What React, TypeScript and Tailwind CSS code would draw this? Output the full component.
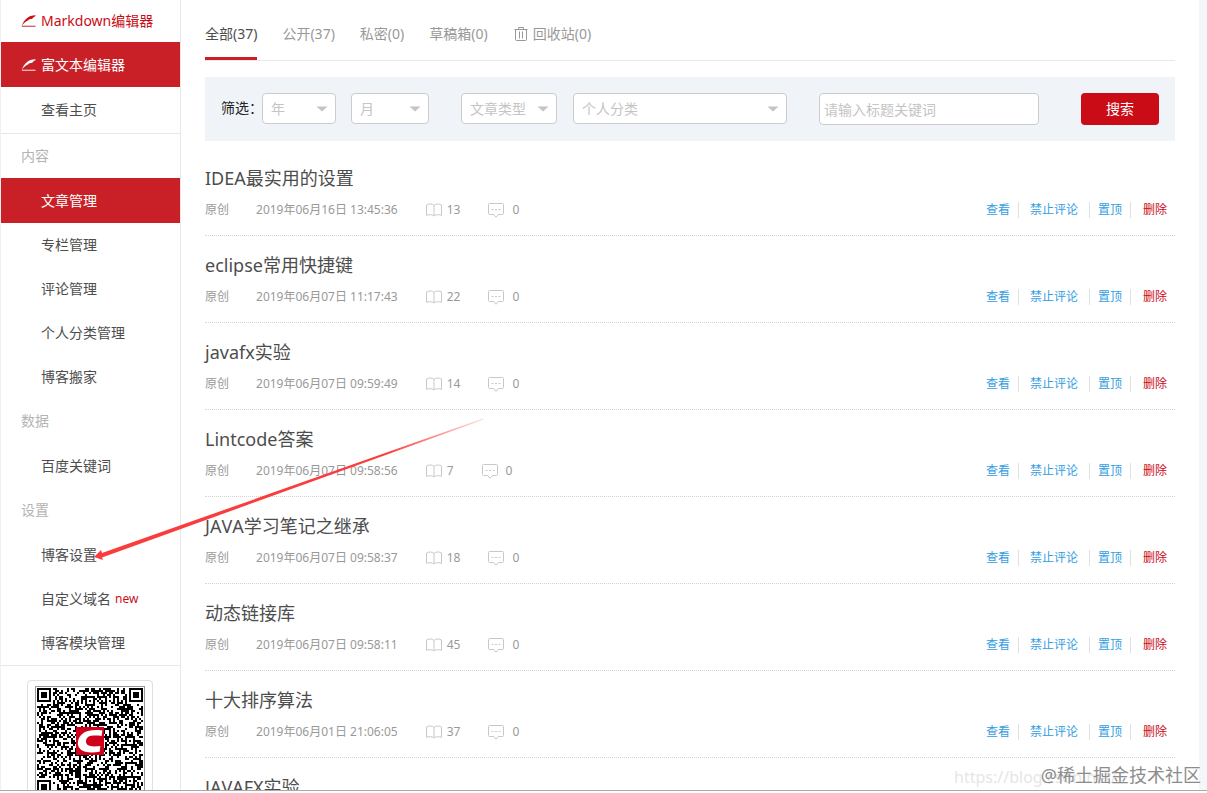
import { useMemo } from 'react';

const EDITORS = [
  { label: 'Markdown编辑器', active: false },
  { label: '富文本编辑器', active: true },
];

const GROUPS = [
  {
    title: '内容',
    items: ['文章管理', '专栏管理', '评论管理', '个人分类管理', '博客搬家'],
  },
  { title: '数据', items: ['百度关键词'] },
  { title: '设置', items: ['博客设置', '自定义域名', '博客模块管理'] },
];

const TABS = ['全部(37)', '公开(37)', '私密(0)', '草稿箱(0)'];

const ARTICLES = [
  { title: 'IDEA最实用的设置', date: '2019年06月16日 13:45:36', reads: 13 },
  { title: 'eclipse常用快捷键', date: '2019年06月07日 11:17:43', reads: 22 },
  { title: 'javafx实验', date: '2019年06月07日 09:59:49', reads: 14 },
  { title: 'Lintcode答案', date: '2019年06月07日 09:58:56', reads: 7 },
  { title: 'JAVA学习笔记之继承', date: '2019年06月07日 09:58:37', reads: 18 },
  { title: '动态链接库', date: '2019年06月07日 09:58:11', reads: 45 },
  { title: '十大排序算法', date: '2019年06月01日 21:06:05', reads: 37 },
  { title: 'JAVAFX实验', date: '2019年06月01日 21:03:22', reads: 31 },
];

const QR_SIZE = 53;

// 二维码点阵：定位角、校正点固定，其余由伪随机数填充
const buildQrPath = () => {
  let seed = 20190616;
  const ring = (x: number, y: number, cx: number, cy: number) =>
    Math.max(Math.abs(x - cx), Math.abs(y - cy));
  const finders = [
    [3, 3],
    [QR_SIZE - 4, 3],
    [3, QR_SIZE - 4],
  ];
  const aligns = [
    [26, 6],
    [6, 26],
    [46, 26],
    [26, 46],
    [46, 46],
  ];
  let d = '';
  for (let y = 0; y < QR_SIZE; y++) {
    for (let x = 0; x < QR_SIZE; x++) {
      seed = (seed * 1103515245 + 12345) % 2147483648;
      let on = seed / 2147483648 > 0.5;
      if (y === 6) on = x % 2 === 0;
      if (x === 6) on = y % 2 === 0;
      aligns.forEach(([cx, cy]) => {
        const r = ring(x, y, cx, cy);
        if (r <= 2) on = r !== 1;
      });
      finders.forEach(([cx, cy]) => {
        const r = ring(x, y, cx, cy);
        if (r <= 4) on = r !== 2 && r !== 4;
      });
      if (on) d += `M${x} ${y}h1v1h-1z`;
    }
  }
  return d;
};

const FeatherIcon = () => (
  <svg className="h-3 w-4 shrink-0" viewBox="0 0 16 12" fill="none">
    <path
      d="M.8 10.800C2.800 5.200 7 .3 14.800.3 14 1.700 13 2.400 11.800 2.700l.4.4C10.500 4.200 9 4.300 7.500 4.600l.3.500C5 6.200 3 8.200.8 10.800z"
      fill="currentColor"
    />
    <path
      d="M.8 11.300h13.700"
      stroke="currentColor"
      strokeWidth="1.300"
      strokeOpacity=".7"
    />
  </svg>
);

const TrashIcon = () => (
  <svg
    className="h-4 w-4"
    viewBox="0 0 16 16"
    fill="none"
    stroke="currentColor"
  >
    <path d="M1.500 3.500h13M5.500 3.500v-2h5v2M2.500 3.500v10q0 1 1 1h9q1 0 1-1v-10M6.500 5.500v7M9.500 5.500v7" />
  </svg>
);

const BookIcon = () => (
  <svg className="h-4 w-4" viewBox="0 0 16 16" fill="none" stroke="#c8c8c8">
    <path d="M8 3.500C6.800 1.700 2.500 1.500.500 3v10.300c2-.8 6.300-1 7.500.700 1.200-1.700 5.500-1.500 7.500-.700V3C13.500 1.500 9.200 1.700 8 3.500zV14" />
  </svg>
);

const CommentIcon = () => (
  <svg className="h-4 w-4" viewBox="0 0 16 16" fill="none" stroke="#c8c8c8">
    <path d="M1.500 1.500h13q1 0 1 1v9q0 1-1 1H10.500L8 15.300 5.500 12.500H1.500q-1 0-1-1v-9q0-1 1-1z" />
    <path d="M3.500 7.500h2M7 7.500h2M10.500 7.500h2" />
  </svg>
);

const FilterSelect = ({ label, width }: { label: string; width: string }) => (
  <div className={`relative ${width}`}>
    <select
      aria-label={label}
      className="block h-[31px] w-full appearance-none rounded border border-[#ccc] bg-white px-2 text-sm text-[#c4c4c4]"
    >
      <option>{label}</option>
    </select>
    <svg
      className="pointer-events-none absolute right-2 top-3 h-2 w-3"
      viewBox="0 0 12 8"
    >
      <path d="M.5 1.500h11L6 6.500z" fill="#c4c4c4" />
    </svg>
  </div>
);

const Sidebar = () => {
  const qrPath = useMemo(buildQrPath, []);

  return (
    <aside className="w-[181px] shrink-0 border-x border-[#e8e8e8] border-l-[#f0f0f0]">
      {EDITORS.map(({ label, active }) => (
        <a
          key={label}
          href="#"
          className={`flex items-center gap-1 pl-5 ${
            active ? 'h-[45px] bg-[#c92027] text-white' : 'h-[42px] text-[#ca0c16]'
          }`}
        >
          <FeatherIcon />
          {label}
        </a>
      ))}
      <a
        href="#"
        className="flex h-[47px] items-center border-b border-[#e8e8e8] pl-10"
      >
        查看主页
      </a>

      <nav className="border-b border-[#e8e8e8]">
        {GROUPS.map(({ title, items }) => (
          <div key={title}>
            <h3 className="flex h-11 items-center pl-5 text-[#b4b4b4]">
              {title}
            </h3>
            {items.map((item, i) => (
              <a
                key={item}
                href="#"
                className={`flex items-center pl-10 ${
                  i === 0 ? 'h-[45px]' : 'h-11'
                } ${item === '文章管理' ? 'bg-[#c92027] text-white' : ''}`}
              >
                {item}
                {item === '自定义域名' && (
                  <span className="ml-1 text-xs text-[#ca0c16]">new</span>
                )}
              </a>
            ))}
          </div>
        ))}
      </nav>

      {/* 公众号二维码 */}
      <div className="ml-[26px] mt-[14px] w-[126px] rounded border border-[#e0e0e0] px-[7px] py-[5px]">
        <svg
          className="w-full"
          viewBox="-1 -1 55 55"
          shapeRendering="crispEdges"
        >
          <rect x="-1" y="-1" width="55" height="55" fill="#999" />
          <rect x="-.5" y="-.5" width="54" height="54" fill="#fff" />
          <path d={qrPath} fill="#000" />
          <rect x="19.500" y="19.500" width="14" height="14" fill="#d0021b" />
          <path
            d="M32.700 21.200C25.500 20.300 21.500 22.300 20.500 26.500 19.800 31 23.500 33 31.300 31.900l.4-2.900c-5.200.7-7.500-.2-7.200-2.700C25 23.800 27.500 23.500 32.300 24z"
            fill="#fff"
            shapeRendering="auto"
          />
        </svg>
      </div>
    </aside>
  );
};

const ArticleRow = ({ title, date, reads }: (typeof ARTICLES)[number]) => (
  <li className="border-b border-dotted border-[#d4d4d4] pb-3 pt-[13px]">
    <h2 className="text-lg leading-8 text-[#4d4d4d] [font-kerning:none]">
      <a href="#">{title}</a>
    </h2>
    <div className="mt-[3px] flex h-[26px] items-center text-xs text-[#999]">
      <span>原创</span>
      <span className="ml-[27px]">{date}</span>
      <span className="ml-7 flex items-center gap-[5px]">
        <BookIcon />
        {reads}
      </span>
      <span className="ml-7 flex items-center gap-2">
        <CommentIcon />0
      </span>
      <div className="ml-auto flex items-center pr-2 text-[#349edf]">
        <a href="#" className="border-r border-[#e0e0e0] pr-2">
          查看
        </a>
        <a href="#" className="border-r border-[#e0e0e0] px-[11px]">
          禁止评论
        </a>
        <a href="#" className="border-r border-[#e0e0e0] px-2">
          置顶
        </a>
        <a href="#" className="pl-3 text-[#ca0c16]">
          删除
        </a>
      </div>
    </div>
  </li>
);

const Arrow = () => (
  <svg
    className="pointer-events-none absolute left-[92px] top-[416px] h-[146px] w-[396px]"
    viewBox="0 0 396 146"
  >
    <defs>
      <linearGradient id="arrowFade" x1="0" x2="1">
        <stop offset=".75" stopColor="#fa3c3c" />
        <stop offset="1" stopColor="#fa3c3c" stopOpacity=".15" />
      </linearGradient>
    </defs>
    <path
      d="M2 141L9 134 10 137 391 2.500 392 3.500 10 141.500 11 144z"
      fill="url(#arrowFade)"
    />
  </svg>
);

const App = () => (
  <div className="relative h-screen overflow-hidden bg-white pb-0.5 font-['Noto_Sans','Noto_Sans_CJK_SC',sans-serif] text-sm text-[#4d4d4d]">
    <div className="flex h-full overflow-hidden border-b border-[#aaa]">
      <Sidebar />

      <main className="min-w-0 flex-1 px-6">
        <nav className="flex h-[61px] gap-[25px] border-b border-[#e8e8e8] text-[#999]">
          {TABS.map((tab, i) => (
            <a
              key={tab}
              href="#"
              className={`flex items-center border-b-3 pt-2.5 ${
                i === 0
                  ? 'border-[#c92027] text-[#4d4d4d]'
                  : 'border-transparent'
              }`}
            >
              {tab}
            </a>
          ))}
          <a
            href="#"
            className="flex items-center gap-1 border-b-3 border-transparent pt-2.5"
          >
            <TrashIcon />
            回收站(0)
          </a>
        </nav>

        {/* 筛选条件 */}
        <form className="mt-4 flex h-16 items-start bg-[#f0f4f8] px-4 pt-4">
          <span className="w-[41px] whitespace-nowrap leading-[30px] text-[#222]">
            筛选：
          </span>
          <FilterSelect label="年" width="w-[74px]" />
          <div className="w-[15px]" />
          <FilterSelect label="月" width="w-[78px]" />
          <div className="w-8" />
          <FilterSelect label="文章类型" width="w-24" />
          <div className="w-4" />
          <FilterSelect label="个人分类" width="w-[214px]" />
          <input
            type="text"
            aria-label="标题关键词"
            placeholder="请输入标题关键词"
            className="ml-8 h-8 w-[220px] rounded border border-[#ccc] bg-white px-1 placeholder:text-[#c4c4c4]"
          />
          <button
            type="button"
            className="ml-auto h-8 w-[78px] rounded bg-[#ca0c16] text-white"
          >
            搜索
          </button>
        </form>

        <ul className="mt-2">
          {ARTICLES.map((article) => (
            <ArticleRow key={article.title} {...article} />
          ))}
        </ul>
      </main>

      <div className="w-2 shrink-0 bg-[#f5f6f7]" />
    </div>

    <Arrow />

    {/* 水印 */}
    <span className="absolute bottom-1 right-[90px] text-base text-[#e6e6e6]">
      https://blog.csdn.net/
    </span>
    <span className="absolute bottom-1 right-[6px] text-lg text-[#8c8c8c]">
      @稀土掘金技术社区
    </span>
  </div>
);

export default App;
